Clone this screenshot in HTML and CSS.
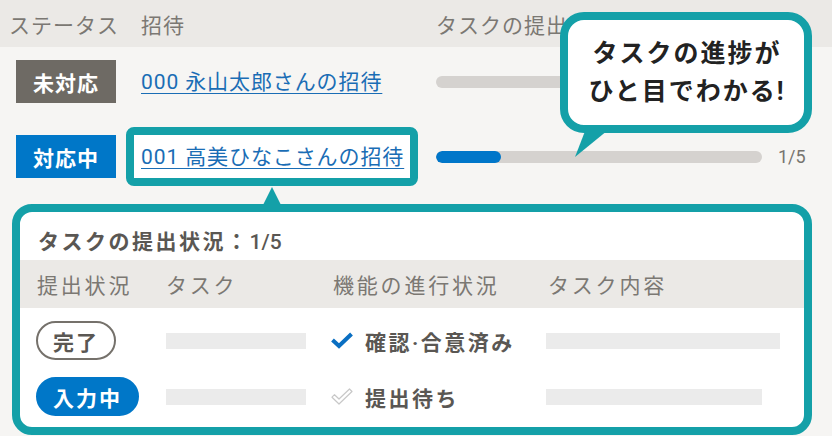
FILE: index.html
```html
<!DOCTYPE html>
<html lang="ja">
<head>
<meta charset="utf-8">
<link rel="stylesheet" href="styles.css">
</head>
<body>
<div class="page">
  <div class="thead">
    <div class="c1 hc1">ステータス</div>
    <div class="c2">招待</div>
    <div class="c3">タスクの提出状況</div>
  </div>

  <div class="row">
    <div class="c1"><span class="badge badge-todo">未対応</span></div>
    <div class="c2"><a class="link" href="#">000 永山太郎さんの招待</a></div>
    <div class="c3 progress">
      <div class="bar"><div class="fill" style="width:0%"></div></div>
    </div>
  </div>

  <div class="row">
    <div class="c1"><span class="badge badge-doing">対応中</span></div>
    <div class="c2"><span class="hl"><a class="link" href="#">001 高美ひなこさんの招待</a></span></div>
    <div class="c3 progress">
      <div class="bar"><div class="fill" style="width:20%"></div></div>
      <span class="count">1/5</span>
    </div>
  </div>

  <div class="popup">
    <div class="ptitle">タスクの提出状況：<span class="num">1/5</span></div>
    <div class="pgrid phead">
      <div>提出状況</div>
      <div>タスク</div>
      <div>機能の進行状況</div>
      <div>タスク内容</div>
    </div>
    <div class="pbody">
      <div class="pgrid prow">
        <div><span class="pill">完了</span></div>
        <div><div class="gbar gbar-task"></div></div>
        <div class="state">
          <svg class="ico" width="22" height="17" viewBox="0 0 22 17"><path d="M1.5 8 L8 14 L20.5 2" fill="none" stroke="#0a6fc2" stroke-width="4"/></svg>
          <span>確認·合意済み</span>
        </div>
        <div><div class="gbar gbar-long"></div></div>
      </div>
      <div class="pgrid prow">
        <div><span class="pill pill-input">入力中</span></div>
        <div><div class="gbar gbar-task"></div></div>
        <div class="state">
          <svg class="ico" width="22" height="17" viewBox="0 0 22 17"><path d="M1 9.2 L3.5 6.7 L8 11 L18.5 1 L21 3.5 L8 16 Z" fill="#fff" stroke="#c8c8c8" stroke-width="1.2" stroke-linejoin="round"/></svg>
          <span>提出待ち</span>
        </div>
        <div><div class="gbar gbar-mid"></div></div>
      </div>
    </div>
  </div>

  <div class="bubble">タスクの進捗が<br>ひと目でわかる!</div>
</div>
</body>
</html>
```

FILE: styles.css
```css
html, body {
  margin: 0;
  padding: 0;
}
body {
  background: #f6f5f3;
  font-family: Roboto, "Noto Sans CJK JP", sans-serif;
}
.page {
  position: relative;
  width: 832px;
  height: 436px;
  overflow: hidden;
}
.thead {
  display: flex;
  align-items: center;
  height: 47px;
  background: #ebe9e6;
  color: #7b7873;
  font-size: 21px;
  letter-spacing: 1px;
}
.c1 {
  width: 125px;
  padding-left: 16px;
  flex: none;
}
.thead .hc1 {
  width: 132px;
  padding-left: 9px;
}
.c2 {
  width: 295px;
  flex: none;
}
.c3 {
  flex: 1;
}
.row {
  display: flex;
  align-items: center;
  height: 75px;
  box-sizing: border-box;
  padding: 13px 0 19px;
}
.badge {
  display: flex;
  align-items: center;
  justify-content: center;
  width: 100px;
  height: 43px;
  color: #fff;
  font-weight: 700;
  font-size: 21px;
  letter-spacing: 1px;
}
.badge-todo {
  background: #6e6a64;
}
.badge-doing {
  background: #0077c8;
}
.link {
  color: #1a6db5;
  font-size: 21px;
  line-height: 30px;
  letter-spacing: 0.9px;
  text-decoration: underline;
  text-decoration-thickness: 1px;
  text-underline-offset: 4px;
}
.hl {
  position: relative;
  display: inline-block;
  z-index: 0;
}
.hl::before {
  content: "";
  position: absolute;
  left: -15px;
  right: -14px;
  top: -15px;
  bottom: -14px;
  border: 8px solid #14a0a8;
  border-radius: 8px;
  background: #fff;
  z-index: -1;
}
.progress {
  display: flex;
  align-items: center;
}
.bar {
  width: 326px;
  height: 12px;
  border-radius: 6px;
  background: #d5d2cf;
  overflow: hidden;
}
.fill {
  height: 100%;
  background: #0076c9;
  border-radius: 6px;
}
.count {
  margin-left: 16px;
  font-size: 18px;
  color: #77746f;
}
.bubble {
  position: absolute;
  left: 560px;
  top: 12px;
  width: 252px;
  height: 121px;
  box-sizing: border-box;
  border: 8px solid #14a0a8;
  border-radius: 24px;
  background: #fff;
  display: flex;
  align-items: center;
  justify-content: center;
  text-align: center;
  padding-left: 2px;
  font-weight: 700;
  font-size: 25px;
  line-height: 38px;
  letter-spacing: 2px;
  color: #222;
}
.bubble::after {
  content: "";
  position: absolute;
  left: 2px;
  top: 106px;
  width: 45px;
  height: 31px;
  background: #14a0a8;
  clip-path: polygon(17px 0, 43px 0, 5px 31px);
}
.popup {
  position: relative;
  margin: 7px 0 0 12px;
  width: 800px;
  height: 231px;
  box-sizing: border-box;
  border: 8px solid #14a0a8;
  border-radius: 20px;
  background: #fff;
}
.popup::before {
  content: "";
  position: absolute;
  left: 242px;
  top: -25px;
  width: 20px;
  height: 20px;
  background: #14a0a8;
  clip-path: polygon(50% 0, 100% 100%, 0 100%);
}
.ptitle {
  height: 48px;
  box-sizing: border-box;
  padding: 14px 0 0 18px;
  font-size: 21px;
  font-weight: 700;
  line-height: 32px;
  letter-spacing: 2.5px;
  color: #5a5753;
}
.ptitle .num {
  font-weight: 500;
  letter-spacing: 0;
}
.pgrid {
  display: grid;
  grid-template-columns: 129px 167px 215px 1fr;
  padding-left: 17px;
  align-items: center;
}
.phead {
  height: 48px;
  background: #ebe9e6;
  color: #7b7873;
  font-size: 21px;
  letter-spacing: 2.8px;
}
.pbody {
  display: flex;
  flex-direction: column;
  gap: 17px;
  padding-top: 13px;
}
.prow {
  height: 39px;
}
.pill {
  display: inline-flex;
  align-items: center;
  height: 39px;
  box-sizing: border-box;
  margin-left: -1px;
  padding: 0 15px;
  border: 2px solid #75716b;
  border-radius: 20px;
  font-weight: 700;
  font-size: 21px;
  letter-spacing: 2px;
  color: #5a5753;
}
.pill-input {
  background: #0077c8;
  border-color: #0077c8;
  color: #fff;
}
.gbar {
  height: 16px;
  background: #ebebeb;
}
.gbar-task {
  width: 140px;
}
.gbar-long {
  width: 234px;
  margin-left: -2px;
}
.gbar-mid {
  width: 216px;
  margin-left: -2px;
}
.state {
  display: flex;
  align-items: center;
  gap: 12px;
  margin-left: -2px;
  font-weight: 700;
  font-size: 21px;
  letter-spacing: 2.5px;
  color: #5a5753;
}
.ico {
  flex: none;
}
```
